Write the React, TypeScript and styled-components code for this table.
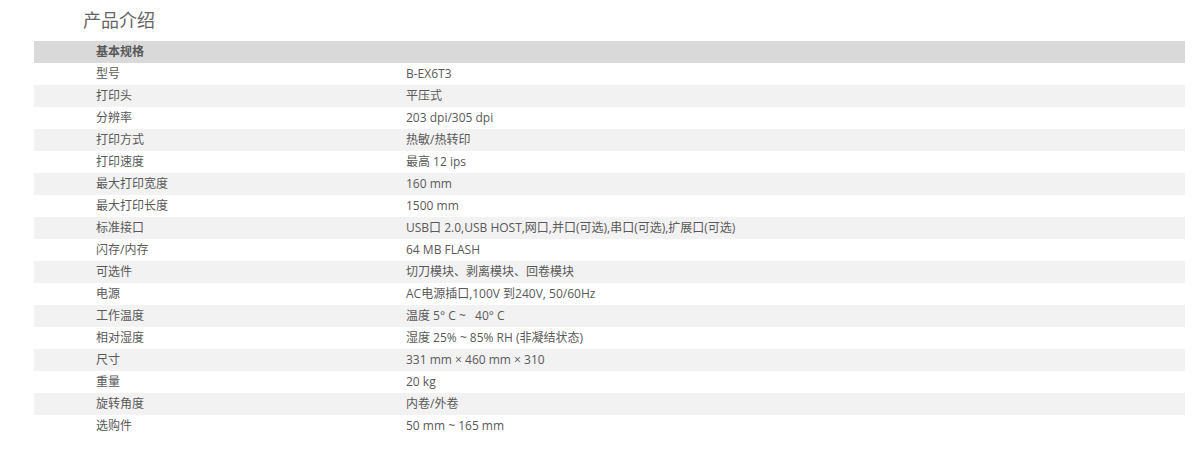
import styled, { createGlobalStyle } from "styled-components";

const specs: [string, string][] = [
  ["型号", "B-EX6T3"],
  ["打印头", "平压式"],
  ["分辨率", "203 dpi/305 dpi"],
  ["打印方式", "热敏/热转印"],
  ["打印速度", "最高 12 ips"],
  ["最大打印宽度", "160 mm"],
  ["最大打印长度", "1500 mm"],
  ["标准接口", "USB口 2.0,USB HOST,网口,并口(可选),串口(可选),扩展口(可选)"],
  ["闪存/内存", "64 MB FLASH"],
  ["可选件", "切刀模块、剥离模块、回卷模块"],
  ["电源", "AC电源插口,100V 到240V, 50/60Hz"],
  ["工作温度", "温度 5° C ~ \u00a0 40° C"],
  ["相对湿度", "湿度 25% ~ 85% RH (非凝结状态)"],
  ["尺寸", "331 mm × 460 mm × 310"],
  ["重量", "20 kg"],
  ["旋转角度", "内卷/外卷"],
  ["选购件", "50 mm ~ 165 mm"],
];

const App = () => {
  return (
    <>
      <GlobalStyle />
      <Page>
        <Title>产品介绍</Title>
        <SpecTable>
          <tbody>
            <HeadRow>
              <Cell>基本规格</Cell>
              <Cell></Cell>
            </HeadRow>
            {specs.map(([label, value], i) => (
              <Row key={label} $striped={i % 2 === 1}>
                <Cell>{label}</Cell>
                <Cell>{value}</Cell>
              </Row>
            ))}
          </tbody>
        </SpecTable>
      </Page>
    </>
  );
};

export default App;

const GlobalStyle = createGlobalStyle`
  body {
    margin: 0;
    background: #fff;
    font-family: "Open Sans", "Noto Sans CJK SC", sans-serif;
  }
`;
const Page = styled.div`
  width: 1204px;
  height: 450px;
  overflow: hidden;
`;
const Title = styled.h2`
  margin: 0;
  padding-left: 83px;
  height: 41px;
  line-height: 38px;
  font-size: 18px;
  font-weight: 400;
  color: #666;
  font-family: "Noto Sans CJK SC", sans-serif;
`;
const SpecTable = styled.table`
  margin-left: 34px;
  width: 1151px;
  border-collapse: collapse;
  table-layout: fixed;
  td:first-child {
    width: 248px;
  }
`;
const Row = styled.tr<{ $striped: boolean }>`
  height: 22px;
  background: ${(props) => (props.$striped ? "#f2f2f2" : "#fff")};
`;
const HeadRow = styled.tr`
  height: 22px;
  background: #d9d9d9;
  td {
    font-weight: 700;
  }
`;
const Cell = styled.td`
  padding: 0 0 0 62px;
  height: 22px;
  font-size: 12px;
  line-height: 22px;
  color: #595959;
  white-space: nowrap;
  font-family: "Open Sans", "Noto Sans CJK SC", sans-serif;
`;
